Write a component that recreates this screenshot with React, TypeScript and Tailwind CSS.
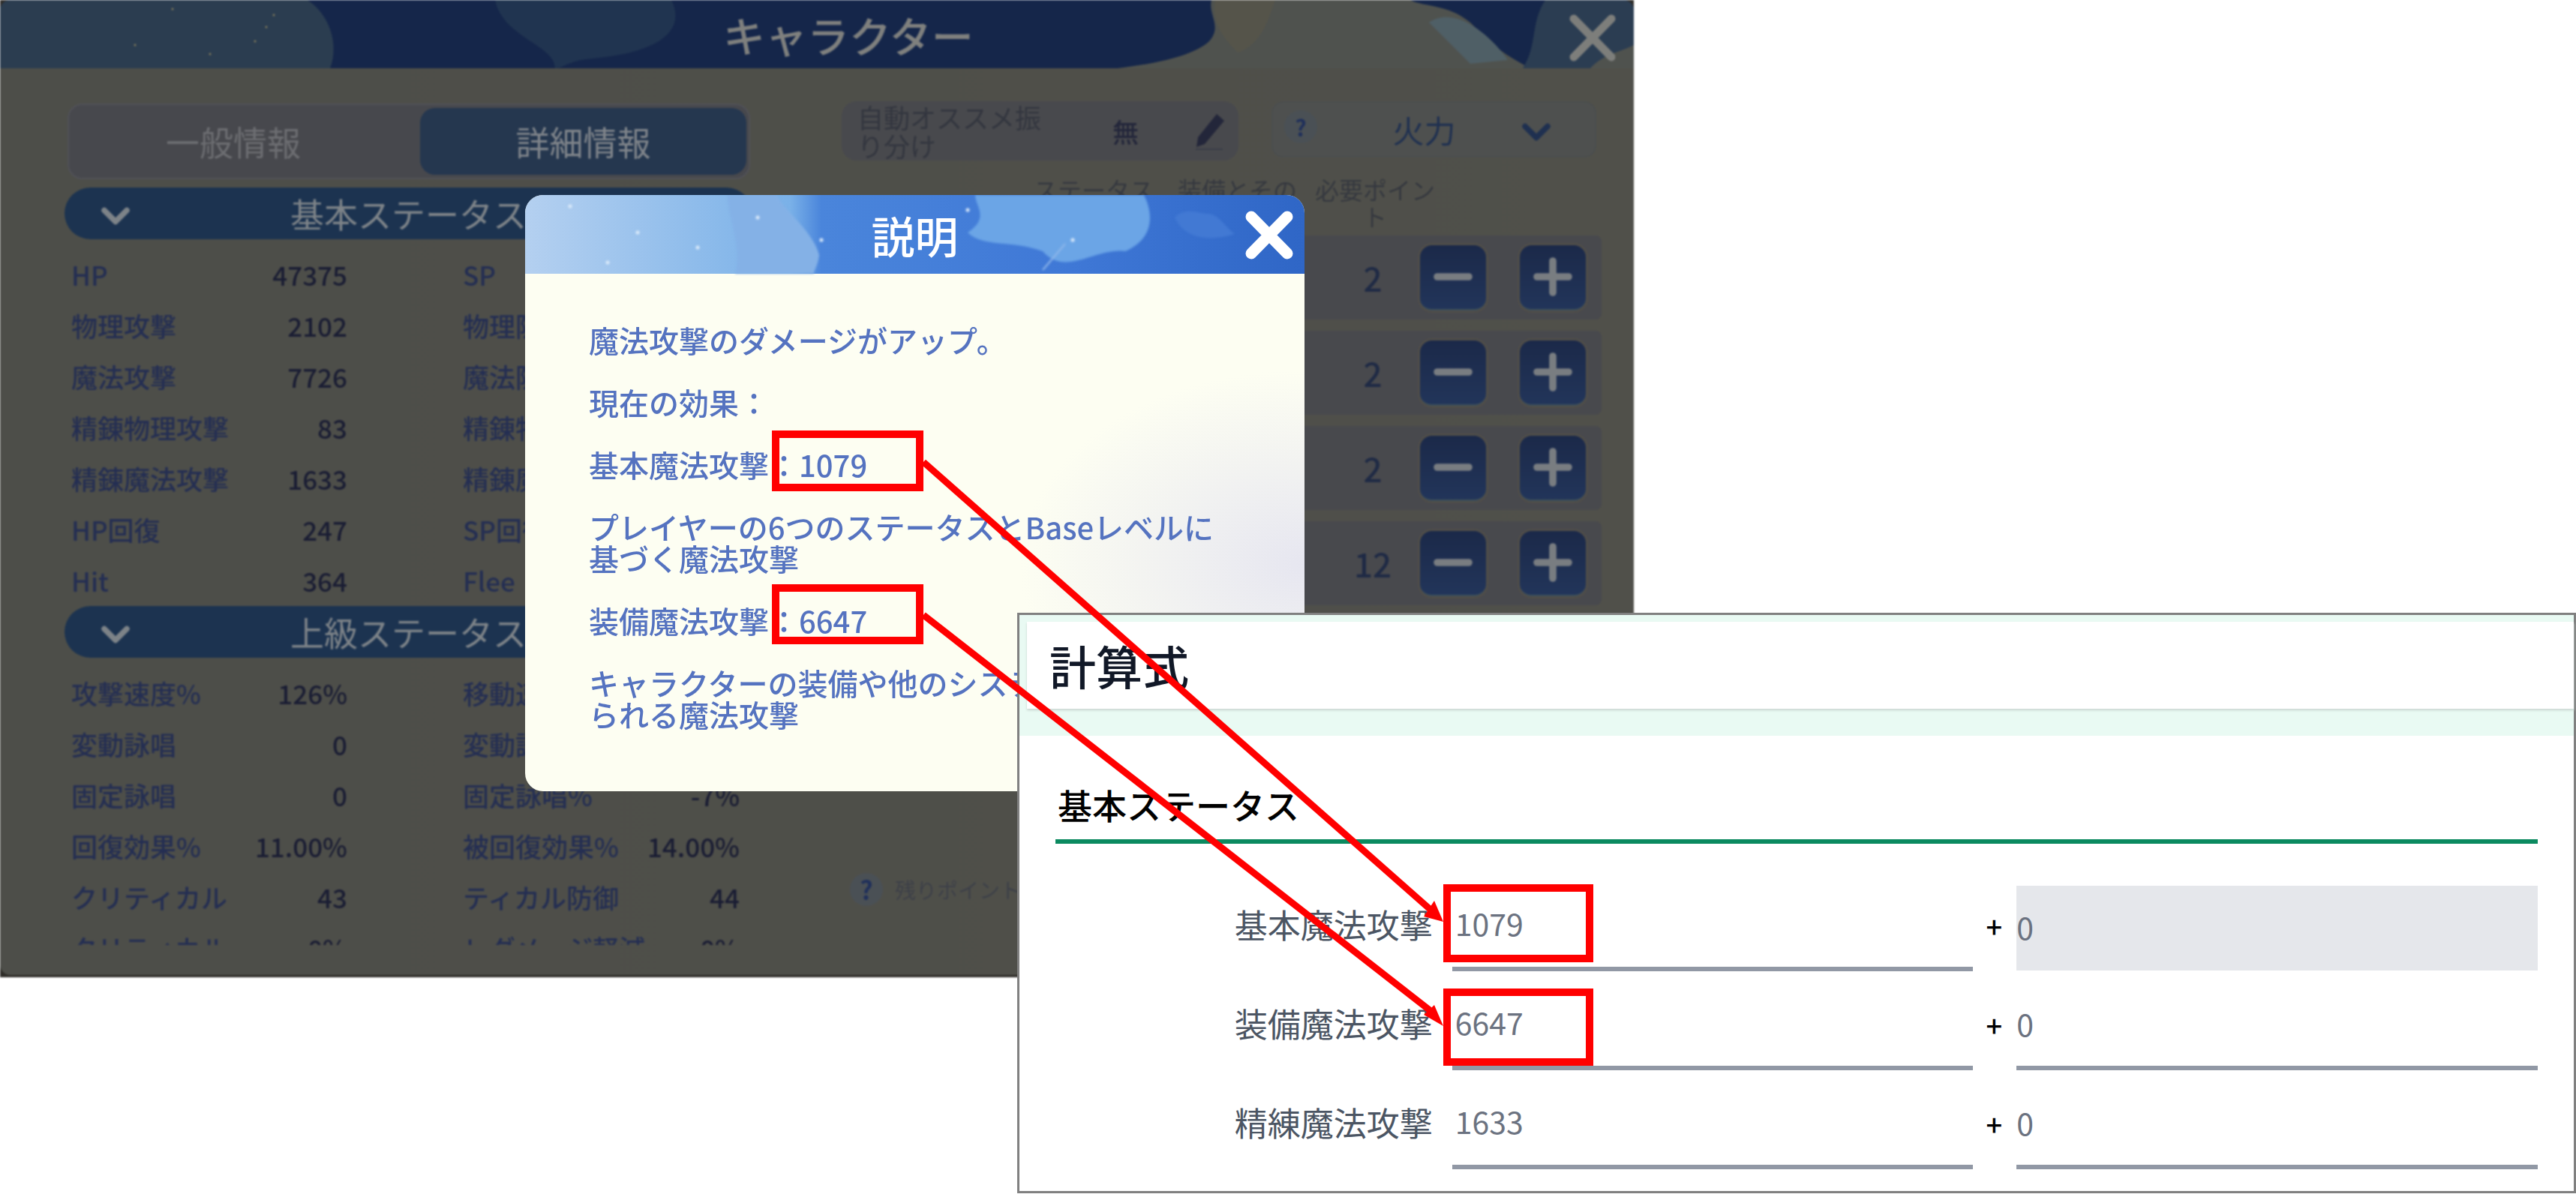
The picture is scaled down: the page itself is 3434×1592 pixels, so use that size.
import { ChevronDown, Minus, Plus } from 'lucide-react'

const basicRows = [
    ['HP', '47375', 'SP', ''],
    ['物理攻撃', '2102', '物理防御', ''],
    ['魔法攻撃', '7726', '魔法防御', ''],
    ['精錬物理攻撃', '83', '精錬物理防御', ''],
    ['精錬魔法攻撃', '1633', '精錬魔法防御', ''],
    ['HP回復', '247', 'SP回復', ''],
    ['Hit', '364', 'Flee', ''],
]

const advancedRows = [
    ['攻撃速度%', '126%', '移動速度%', ''],
    ['変動詠唱', '0', '変動詠唱%', ''],
    ['固定詠唱', '0', '固定詠唱%', '-7%'],
    ['回復効果%', '11.00%', '被回復効果%', '14.00%'],
    ['クリティカル', '43', 'ティカル防御', '44'],
    ['クリティカル', '0%', 'レダメージ軽減', '0%'],
]

function StatGrid({ rows }: { rows: string[][] }) {
    return (
        <div className="flex flex-col pl-[9px]">
            {rows.map((r, i) => (
                <div key={i} className="flex h-[68px] items-center pb-[4px] text-[35px] font-medium leading-none">
                    <div className="flex w-[368px] justify-between">
                        <span className="text-[#242e52]">{r[0]}</span>
                        <span className="text-[#1a1d33]">{r[1]}</span>
                    </div>
                    <div className="ml-[154px] flex w-[369px] justify-between whitespace-nowrap">
                        <span className="text-[#242e52]">{r[2]}</span>
                        <span className="text-[#1a1d33]">{r[3]}</span>
                    </div>
                </div>
            ))}
        </div>
    )
}

function SectionBar({ title }: { title: string }) {
    return (
        <div className="relative flex h-[69px] w-[917px] shrink-0 items-center justify-center rounded-full bg-[#1c3350] text-[45px] leading-none text-[#7d8388]">
            <ChevronDown size={60} strokeWidth={3} className="absolute left-[38px] top-[8px] text-[#7d8388]" />
            {title}
        </div>
    )
}

function StepButton({ children }: { children: React.ReactNode }) {
    return (
        <div className="flex h-[87px] w-[88px] items-center justify-center rounded-[16px] border-b-2 border-[#3d4f5a] bg-[linear-gradient(#1b2949,#22355a)] text-[#797d81] shadow-[0_0_0_3px_#4f4d49]">
            {children}
        </div>
    )
}

function PointRow({ value }: { value: string }) {
    return (
        <div className="flex h-[112px] items-center rounded-[8px] bg-[#48494d]">
            <span className="ml-[648px] w-[120px] text-center text-[44px] font-medium leading-none text-[#1f2a45]">{value}</span>
            <div className="ml-[3px] flex gap-[45px]">
                <StepButton><Minus size={72} strokeWidth={3.2} /></StepButton>
                <StepButton><Plus size={72} strokeWidth={3.2} /></StepButton>
            </div>
        </div>
    )
}

function HelpDot({ size }: { size: string }) {
    return (
        <span className={size + ' flex items-center justify-center rounded-full bg-[#4a5055] font-bold leading-none text-[#20305a]'}>?</span>
    )
}

function GameHeader() {
    return (
        <div className="relative flex h-[91px] shrink-0 items-center justify-center overflow-hidden bg-[#15264a] pl-[84px]">
            <svg className="absolute inset-0" width="2178" height="91" viewBox="0 0 2178 91">
                <path d="M0 0H410C440 20 452 60 440 91H0Z" fill="#2b3d50" />
                <path d="M660 0H895C915 40 880 70 790 78C760 80 750 91 740 91C740 60 670 50 660 0Z" fill="#203450" />
                <path d="M1615 0H1880C1900 10 1930 5 1960 30C1990 60 2000 70 2040 91H1490C1540 85 1590 75 1612 55C1630 35 1610 20 1615 0Z" fill="#4f524e" />
                <path d="M1620 0H1700C1690 30 1680 60 1650 70C1630 50 1615 30 1620 0Z" fill="#55544a" />
                <path d="M1905 30C1940 5 1990 50 2010 80L1960 85Z" fill="#4f5f66" />
                <path d="M2060 0H2178V60L2150 91H2030C2050 60 2040 30 2060 0Z" fill="#2b3d52" />
                <path d="M2120 91C2140 70 2160 70 2178 60V91Z" fill="#4f524e" />
                {[[230, 12], [180, 60], [355, 36], [280, 72], [365, 20], [340, 55]].map(([x, y], i) => (
                    <circle key={i} cx={x} cy={y} r="1.5" fill="#7f7a5c" />
                ))}
            </svg>
            <span className="relative text-[56px] font-medium leading-none text-[#7f807e]">キャラクター</span>
            <svg className="absolute left-[2088px] top-[16px]" width="70" height="70" viewBox="0 0 70 70">
                <path d="M10 9L60 60M60 9L10 60" stroke="#7d7e7b" strokeWidth="11" strokeLinecap="round" />
            </svg>
        </div>
    )
}

function GameWindow() {
    return (
        <div className="absolute left-0 top-0 h-[1303px] w-[2178px] bg-[#2e2c28] blur-[0.8px]">
            <div className="flex h-[1300px] flex-col overflow-hidden rounded-[14px] bg-[linear-gradient(90deg,#4d4e49,#50504a)]">
                <GameHeader />
                <div className="flex flex-1">
                    {/* left column */}
                    <div className="ml-[86px] flex h-[1169px] w-[917px] flex-col overflow-hidden">
                        <div className="ml-[4px] mt-[47px] flex h-[101px] w-[910px] shrink-0 items-center rounded-[20px] border-2 border-[#505157] bg-[#47484d] pr-[3px] text-[45px] leading-none">
                            <span className="flex-1 pr-[30px] text-center text-[#6c6d71]">一般情報</span>
                            <span className="flex h-[89px] w-[435px] items-center justify-center rounded-[20px] bg-[#25374f] text-[#7f848a]">詳細情報</span>
                        </div>
                        <div className="mt-[11px]"><SectionBar title="基本ステータス" /></div>
                        <div className="mt-[14px]"><StatGrid rows={basicRows} /></div>
                        <div className="-mt-[1px]"><SectionBar title="上級ステータス" /></div>
                        <div className="mt-[14px] h-[369px] overflow-hidden"><StatGrid rows={advancedRows} /></div>
                    </div>

                    {/* right column */}
                    <div className="ml-[119px] flex w-[1013px] flex-col">
                        <div className="mt-[44px] flex items-start">
                            <div className="flex h-[79px] w-[529px] items-center rounded-[20px] bg-[#48494d] pl-[21px] text-[35px] text-[#33363f]">
                                <span className="w-[255px] leading-[38px]">自動オススメ振り分け</span>
                                <span className="ml-[85px] font-medium leading-none text-[#23263a]">無</span>
                                <svg className="ml-[76px]" width="40" height="50" viewBox="0 0 40 50">
                                    <path d="M28 2L38 11L12 42L1 46L3 33Z" fill="#23263a" />
                                    <path d="M0 49H36" stroke="#3a3d48" strokeWidth="2" />
                                </svg>
                            </div>
                            <div className="relative ml-[44px] flex h-[75px] w-[433px] items-center justify-center rounded-[16px] border-2 border-[#4b4e4e] bg-[#4e504f] text-[42px] leading-none text-[#1f3050]">
                                <span className="absolute left-[15px] top-[10px]"><HelpDot size="h-[44px] w-[44px] text-[30px]" /></span>
                                <span className="mr-[26px]">火力</span>
                                <ChevronDown size={60} strokeWidth={3} className="absolute right-[48px] top-[9px]" />
                            </div>
                        </div>
                        <div className="mt-[20px] flex h-[80px] text-[32px] leading-[36px] text-[#35383f]">
                            <span className="ml-[256px] w-[192px] whitespace-nowrap">ステータス</span>
                            <span className="w-[183px] whitespace-nowrap">装備とその</span>
                            <span className="w-[160px] text-center">必要ポイン<br />ト</span>
                        </div>
                        <div className="flex flex-col gap-[15px]">
                            <PointRow value="2" />
                            <PointRow value="2" />
                            <PointRow value="2" />
                            <PointRow value="12" />
                        </div>
                        <div className="mt-[357px] flex items-center text-[28px] leading-none text-[#3d4048]">
                            <HelpDot size="ml-[11px] h-[44px] w-[44px] text-[34px]" />
                            <span className="ml-[16px] whitespace-nowrap">残りポイント</span>
                        </div>
                    </div>
                </div>
            </div>
        </div>
    )
}

function HelpDialog() {
    return (
        <div className="absolute left-[700px] top-[260px] flex h-[795px] w-[1039px] flex-col overflow-hidden rounded-[24px] bg-[radial-gradient(380px_260px_at_100%_62%,#e6e6f0_0%,#fdfef2_100%)] blur-[0.5px]">
            <div className="relative flex h-[105px] shrink-0 items-center justify-center bg-[linear-gradient(90deg,#b4d0f0_0%,#7ab1e8_34%,#4a85db_38%,#3f78d6_70%,#2f66c6_100%)]">
                <svg className="absolute inset-0 blur-[1.5px]" width="1039" height="105" viewBox="0 0 1039 105">
                    <path d="M270 0H335C345 20 385 50 392 80C390 95 385 100 385 105H280C290 70 270 30 270 0Z" fill="#84b1e6" />
                    <path d="M600 0H825C840 30 835 60 800 75C760 70 720 110 690 75C650 60 610 70 590 50C620 30 600 15 600 0Z" fill="#6ba5e6" />
                    <path d="M866 30C880 15 900 25 910 25C925 25 935 45 946 52C915 62 880 60 866 30Z" fill="#4279d3" />
                    <path d="M690 100L720 65" stroke="#8fb7ea" strokeWidth="2" />
                    {[[60, 15], [110, 90], [230, 70], [395, 60], [310, 30], [590, 20], [730, 60], [150, 50]].map(([x, y], i) => (
                        <circle key={i} cx={x} cy={y} r="2.5" fill="#dcebfa" />
                    ))}
                </svg>
                <span className="relative text-[58px] font-medium leading-none text-white">説明</span>
                <svg className="absolute left-[954px] top-[16px]" width="76" height="76" viewBox="0 0 76 76">
                    <path d="M14 13L62 62M62 13L14 62" stroke="#ffffff" strokeWidth="15" strokeLinecap="round" />
                </svg>
            </div>
            <div className="flex flex-col gap-[41px] whitespace-nowrap pl-[85px] pt-[67px] text-[40px] font-medium leading-[42px] text-[#5573c0]">
                <p>魔法攻撃のダメージがアップ。</p>
                <p>現在の効果：</p>
                <p>基本魔法攻撃：1079</p>
                <p>プレイヤーの6つのステータスとBaseレベルに<br />基づく魔法攻撃</p>
                <p>装備魔法攻撃：6647</p>
                <p>キャラクターの装備や他のシステムから得<br />られる魔法攻撃</p>
            </div>
        </div>
    )
}

const formulaRows = [
    { label: '基本魔法攻撃', value: '1079', locked: true },
    { label: '装備魔法攻撃', value: '6647', locked: false },
    { label: '精練魔法攻撃', value: '1633', locked: false },
]

function FormulaPanel() {
    return (
        <div className="absolute left-[1356px] top-[817px] h-[774px] w-[2078px] border-[3px] border-[#808080] bg-white">
            <div className="h-[161px] bg-[#e9faf3] pl-[10px] pt-[9px]">
                <div className="flex h-[116px] items-center bg-white pl-[30px] text-[62px] font-medium leading-none text-[#111827] shadow-[0_2px_3px_#c9d6d0]">計算式</div>
            </div>
            <div className="px-[48px]">
                <div className="flex h-[144px] items-end border-b-[6px] border-[#0b8a60] pb-[24px] pl-[3px] text-[46px] font-medium leading-none text-black">基本ステータス</div>
                <div className="mt-[54px] flex flex-col gap-[16px]">
                    {formulaRows.map(row => (
                        <div key={row.label} className="flex h-[116px] items-center">
                            <span className="w-[503px] pb-[10px] text-right text-[44px] leading-none text-[#4b5563]">{row.label}</span>
                            <div className="ml-[26px] flex h-full w-[695px] items-center border-b-[6px] border-[#9198a5] pb-[8px] pl-[4px] text-[41px] leading-none text-[#6b7280]">{row.value}</div>
                            <span className="w-[58px] pb-[4px] pr-[2px] text-center text-[38px] font-medium leading-none text-black">+</span>
                            <div className={(row.locked ? 'h-[113px] bg-[#e5e7eb]' : 'h-full border-b-[6px] border-[#9198a5]') + ' flex w-[695px] items-center pb-[4px] text-[41px] leading-none text-[#6b7280]'}>0</div>
                        </div>
                    ))}
                </div>
            </div>
        </div>
    )
}

function Callouts() {
    return (
        <>
            <div className="absolute left-[1029px] top-[574px] h-[81px] w-[202px] border-[10px] border-[#ff0000]" />
            <div className="absolute left-[1029px] top-[779px] h-[80px] w-[202px] border-[10px] border-[#ff0000]" />
            <div className="absolute left-[1924px] top-[1179px] h-[104px] w-[200px] border-[10px] border-[#ff0000]" />
            <div className="absolute left-[1924px] top-[1318px] h-[103px] w-[200px] border-[10px] border-[#ff0000]" />
            <svg className="absolute left-0 top-0" width="3434" height="1592" viewBox="0 0 3434 1592">
                <path d="M1231 616L1906 1212" fill="none" stroke="#ff0000" strokeWidth="9" />
                <path d="M1924 1229L1912 1201L1898 1222Z" fill="#ff0000" />
                <path d="M1231 820L1906 1347" fill="none" stroke="#ff0000" strokeWidth="9" />
                <path d="M1924 1368L1912 1340L1898 1353Z" fill="#ff0000" />
            </svg>
        </>
    )
}

export default function App() {
    return (
        <div className="relative h-[1592px] w-[3434px] overflow-hidden bg-white font-['Noto_Sans_CJK_JP','Noto_Sans',sans-serif]">
            <GameWindow />
            <HelpDialog />
            <FormulaPanel />
            <Callouts />
        </div>
    )
}
